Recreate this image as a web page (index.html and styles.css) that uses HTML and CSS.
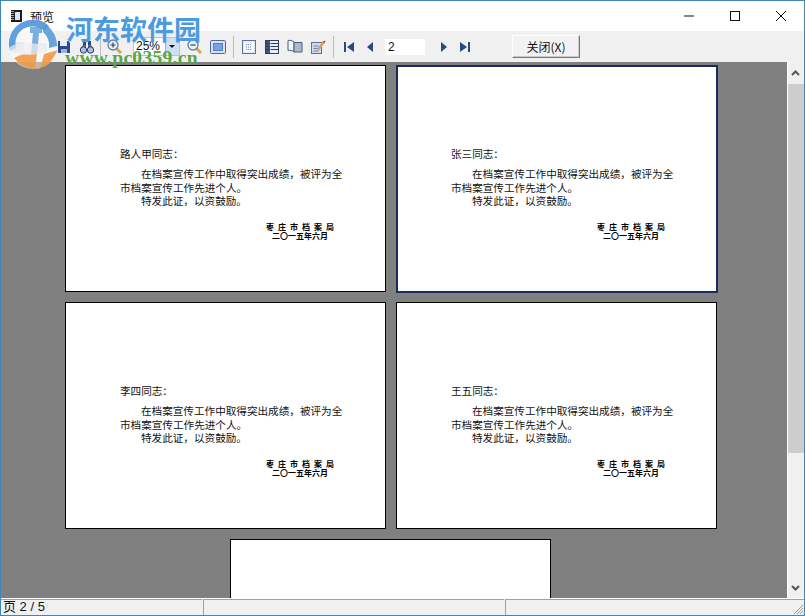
FILE: index.html
```html
<!DOCTYPE html>
<html lang="zh">
<head>
<meta charset="utf-8">
<title>预览</title>
<link rel="stylesheet" href="styles.css">
</head>
<body>
<div class="window">
  <header class="titlebar">
    <svg class="app-icon" width="14" height="14" viewBox="0 0 14 14"><rect x="1" y="1" width="11" height="12" fill="#1c1c1c"/><rect x="5" y="3" width="5" height="8" fill="#dfe6f2"/><path d="M1 2.500h3M1 4.500h3M1 6.500h3M1 8.500h3M1 10.500h3" stroke="#999" stroke-width="1"/></svg>
    <span class="title">预览</span>
    <div class="caption">
      <svg width="46" height="30" viewBox="0 0 46 30"><path d="M18 15h10" stroke="#111"/></svg>
      <svg width="46" height="30" viewBox="0 0 46 30"><rect x="18.500" y="10.500" width="9" height="9" fill="none" stroke="#111"/></svg>
      <svg width="46" height="30" viewBox="0 0 46 30"><path d="M18 10l10 10M28 10l-10 10" stroke="#111"/></svg>
    </div>
  </header>
  <div class="toolbar">
    <span class="tool"><svg width="16" height="14" viewBox="0 0 16 14"><rect x="1" y="2" width="13" height="10" rx="2" fill="#c9d6e6"/></svg></span>
    <span class="tool"><svg width="16" height="14" viewBox="0 0 16 14"><rect x="2" y="3" width="12" height="9" rx="2" fill="#d8dfe8"/></svg></span>
    <span class="tool"><svg width="16" height="16" viewBox="0 0 16 16"><path d="M2 2h10l2 2v10H2z" fill="#2a4a8c"/><rect x="4" y="2" width="7" height="5" fill="#e8eef8"/><rect x="5" y="10" width="6" height="4" fill="#9db4d8"/></svg></span>
    <span class="tool"><svg width="16" height="16" viewBox="0 0 16 16"><path d="M4 2h3v5H4zM9 2h3v5H9z" fill="#33456e"/><path d="M2 9l2-3h3v3zM14 9l-2-3H9v3z" fill="#52668f"/><circle cx="4.500" cy="11" r="3.200" fill="#a9bfe2" stroke="#2b3c66"/><circle cx="11.500" cy="11" r="3.200" fill="#a9bfe2" stroke="#2b3c66"/></svg></span>
    <span class="sep"></span>
    <span class="tool"><svg width="17" height="17" viewBox="0 0 17 17"><path d="M10 10l5 5" stroke="#c8b050" stroke-width="3"/><circle cx="7" cy="7" r="5" fill="#e6eef8" stroke="#6a7f99" stroke-width="1.300"/><path d="M4.500 7h5M7 4.500v5" stroke="#345" stroke-width="1.200"/></svg></span>
    <div class="combo"><span class="combo-value">25%</span><span class="combo-arrow"></span></div>
    <span class="tool"><svg width="17" height="17" viewBox="0 0 17 17"><path d="M10 10l5 5" stroke="#c8b050" stroke-width="3"/><circle cx="7" cy="7" r="5" fill="#e6eef8" stroke="#6a7f99" stroke-width="1.300"/><path d="M4.500 7h5" stroke="#345" stroke-width="1.200"/></svg></span>
    <span class="tool"><svg width="16" height="14" viewBox="0 0 16 14"><rect x=".5" y=".5" width="15" height="13" rx="1" fill="#d5e2f5" stroke="#51689a"/><rect x="3" y="3" width="10" height="8" fill="#4f7fcf"/><path d="M4 5h8M4 7h8M4 9h8" stroke="#a8c4ee"/></svg></span>
    <span class="sep wide"></span>
    <span class="tool"><svg width="14" height="14" viewBox="0 0 14 14"><rect x=".5" y=".5" width="13" height="13" fill="#dfe8f6" stroke="#5f7399"/><rect x="2" y="2" width="10" height="10" fill="#f6f8fc"/><path d="M4 4.500h6M4 7h6M4 9.500h6" stroke="#7288ae" stroke-dasharray="1 1"/></svg></span>
    <span class="tool"><svg width="14" height="14" viewBox="0 0 14 14"><rect x=".5" y=".5" width="13" height="13" fill="#e9eff9" stroke="#2f3e5c"/><rect x="1" y="1" width="4" height="12" fill="#40577f"/><path d="M5.500 3.500h8M5.500 6.500h8M5.500 9.500h8M1 3.500h4M1 6.500h4M1 9.500h4" stroke="#2f3e5c"/></svg></span>
    <span class="tool"><svg width="16" height="15" viewBox="0 0 16 15"><path d="M7 3C5.500 1.500 3 1 1 1.500v10c2-.5 4.500 0 6 1.500z" fill="#f4f6fa" stroke="#4c5c7c"/><path d="M7 3.500h8v9.500H7z" fill="#a9b9d2" stroke="#4c5c7c"/></svg></span>
    <span class="tool"><svg width="16" height="16" viewBox="0 0 16 16"><rect x="1.500" y="3.500" width="10" height="11" fill="#cfdcef" stroke="#5c7199"/><path d="M3.500 7h5M3.500 9.500h5M3.500 12h5" stroke="#6a80a5"/><path d="M7 10l6-8 2 1.500-6 8z" fill="#d9a066"/><path d="M12.500 2.500l2.500 1.500 .5-2.500z" fill="#c8402c"/></svg></span>
    <span class="sep narrow"></span>
    <span class="tool nav"><svg width="12" height="12" viewBox="0 0 12 12"><path d="M1 1h2v10H1zM11 1v10L4 6z" fill="#2b4a78"/></svg></span>
    <span class="tool nav"><svg width="12" height="12" viewBox="0 0 12 12"><path d="M9 1v10L3 6z" fill="#2b4a78"/></svg></span>
    <span class="page-input">2</span>
    <span class="tool nav"><svg width="12" height="12" viewBox="0 0 12 12"><path d="M3 1v10l6-5z" fill="#2b4a78"/></svg></span>
    <span class="tool nav"><svg width="12" height="12" viewBox="0 0 12 12"><path d="M9 1h2v10H9zM1 1v10l7-5z" fill="#2b4a78"/></svg></span>
    <button class="close-btn">关闭(X)</button>
  </div>
  <div class="middle">
    <main class="canvas">
      <div class="pages">
        <article class="page">
          <p class="name">路人甲同志：</p>
          <p class="body indent">在档案宣传工作中取得突出成绩，被评为全</p>
          <p class="body">市档案宣传工作先进个人。</p>
          <p class="body indent">特发此证，以资鼓励。</p>
          <p class="org">枣 庄 市 档 案 局</p>
          <p class="date">二〇一五年六月</p>
        </article>
        <article class="page selected">
          <p class="name">张三同志：</p>
          <p class="body indent">在档案宣传工作中取得突出成绩，被评为全</p>
          <p class="body">市档案宣传工作先进个人。</p>
          <p class="body indent">特发此证，以资鼓励。</p>
          <p class="org">枣 庄 市 档 案 局</p>
          <p class="date">二〇一五年六月</p>
        </article>
        <article class="page">
          <p class="name">李四同志：</p>
          <p class="body indent">在档案宣传工作中取得突出成绩，被评为全</p>
          <p class="body">市档案宣传工作先进个人。</p>
          <p class="body indent">特发此证，以资鼓励。</p>
          <p class="org">枣 庄 市 档 案 局</p>
          <p class="date">二〇一五年六月</p>
        </article>
        <article class="page">
          <p class="name">王五同志：</p>
          <p class="body indent">在档案宣传工作中取得突出成绩，被评为全</p>
          <p class="body">市档案宣传工作先进个人。</p>
          <p class="body indent">特发此证，以资鼓励。</p>
          <p class="org">枣 庄 市 档 案 局</p>
          <p class="date">二〇一五年六月</p>
        </article>
        <article class="page last"></article>
      </div>
    </main>
    <aside class="scrollbar">
      <svg width="17" height="17" viewBox="0 0 17 17"><path d="M5 10l3.500-3.500L12 10" fill="none" stroke="#555" stroke-width="2"/></svg>
      <div class="track"><div class="thumb"></div></div>
      <svg width="17" height="17" viewBox="0 0 17 17"><path d="M5 7l3.500 3.500L12 7" fill="none" stroke="#555" stroke-width="2"/></svg>
    </aside>
  </div>
  <footer class="status">
    <div class="panel first">页 2 / 5</div>
    <div class="panel second"></div>
    <div class="panel third">
      <svg class="grip" width="12" height="12" viewBox="0 0 12 12"><path d="M11 2l-9 9M11 5l-6 6M11 8l-3 3" stroke="#999"/></svg>
    </div>
  </footer>
  <div class="watermark">
    <svg class="wm-logo" width="58" height="52" viewBox="0 0 58 52">
      <circle cx="28" cy="26" r="25" fill="#fff" opacity=".45"/>
      <path d="M5 33A24 24 0 0 1 44 8l-5 5A17 17 0 0 0 11 30z" fill="#4f96d8" opacity=".9"/>
      <path d="M40 6a25 25 0 0 1 12 22l-8 2a18 18 0 0 0-6-16z" fill="#4f96d8" opacity=".85"/>
      <path d="M9 40a25 25 0 0 0 36 5l8-13-14 4-4 15h-5l2-15H18z" fill="#ef9a45" opacity=".9"/>
      <path d="M25 9h12v6h-3l-2 21h-6l2-21h-3z" fill="#4f96d8" opacity=".75"/>
      <ellipse cx="23" cy="31" rx="19" ry="6" fill="#eee" opacity=".7"/>
    </svg>
    <span class="wm-cn">河东软件园</span>
    <span class="wm-url">www.pc0359.cn</span>
  </div>
</div>
</body>
</html>
```

FILE: styles.css
```css
* { box-sizing: border-box; }
html, body { margin: 0; padding: 0; }
body { width: 805px; height: 616px; overflow: hidden; font-family: "Noto Sans CJK SC", "Liberation Sans", sans-serif; }
.window { position: relative; width: 805px; height: 616px; display: flex; flex-direction: column; border: 1px solid #3f86bd; background: #f0f0f0; }
.titlebar { height: 30px; background: #fff; display: flex; align-items: center; padding-left: 9px; flex: none; }
.app-icon { flex: none; }
.title { font-size: 12px; margin-left: 6px; color: #111; }
.caption { margin-left: auto; display: flex; }
.caption svg { display: block; }
.toolbar { height: 31px; background: #f0f0f0; display: flex; align-items: center; padding-left: 5px; flex: none; }
.tool { width: 23px; height: 24px; display: flex; align-items: center; justify-content: center; flex: none; }
.tool.nav { width: 21px; }
.sep { width: 5px; height: 22px; flex: none; }
.sep::after { content: ""; display: block; width: 1px; height: 22px; background: #bdbdbd; margin: 0 auto; }
.sep.wide { width: 8px; }
.sep.narrow { width: 9px; }
.combo { width: 47px; height: 19px; margin: 0 3px 0 7px; display: flex; background: #fff; border: 1px solid #a9c6e6; flex: none; }
.combo-value { flex: 1; font: 12px/17px "Liberation Sans", sans-serif; color: #111; padding-left: 2px; }
.combo-arrow { width: 14px; background: #cfe0f4; border-left: 1px solid #8fb2dc; position: relative; }
.combo-arrow::after { content: ""; position: absolute; left: 3px; top: 7px; border: 3px solid transparent; border-top: 3px solid #111; }
.page-input { width: 40px; height: 16px; margin: 0 8px 0 5px; background: #fff; font: 12px/16px "Liberation Sans", sans-serif; color: #111; padding-left: 3px; flex: none; }
.close-btn { width: 68px; height: 23px; margin-left: 37px; padding: 0; background: #f2f2f2; border: 1px solid; border-color: #fff #7a7a7a #7a7a7a #fff; box-shadow: inset -1px -1px 0 #c8c8c8; font: 12px "Noto Sans CJK SC", sans-serif; color: #111; flex: none; }
.middle { flex: 1; min-height: 0; display: flex; }
.canvas { flex: 1; min-width: 0; background: #808080; overflow: hidden; padding: 3px 0 0 64px; }
.pages { width: 652px; display: flex; flex-wrap: wrap; column-gap: 10px; row-gap: 10px; }
.page { width: 321px; height: 227px; background: #fff; border: 1px solid #000; padding: 81px 0 0 54px; flex: none; color: #111; }
.page.selected { width: 322px; height: 228px; border: 2px solid #1a2a5e; margin: 0 -1px -1px 0; padding: 80px 0 0 53px; }
.page.last { margin-left: 165px; }
.page p { margin: 0; }
.name { font-size: 10.6px; line-height: 14px; margin-bottom: 6px !important; }
.body { font-size: 10.6px; line-height: 13.5px; white-space: nowrap; }
.indent { padding-left: 21px; }
.org, .date { font-size: 8px; font-weight: 700; line-height: 9px; white-space: nowrap; color: #000; }
.org { margin: 14px 0 0 146px !important; letter-spacing: 1.1px; }
.date { margin-left: 152px !important; }
.scrollbar { width: 17px; flex: none; background: #f0f0f0; border-left: 1px solid #fff; display: flex; flex-direction: column; }
.scrollbar svg { flex: none; display: block; margin: 3px 0 2px -1px; }
.track { flex: 1; min-height: 0; }
.thumb { height: 369px; background: #cdcdcd; }
.status { height: 17px; flex: none; display: flex; background: #f0f0f0; border-top: 1px solid #fff; font: 13px/14px "Liberation Sans", "Noto Sans CJK SC", sans-serif; color: #111; }
.panel { border-left: 1px solid #a0a0a0; border-top: 1px solid #a0a0a0; position: relative; }
.first { width: 201px; border-left: 0; padding-left: 2px; }
.second { width: 301px; margin-left: 1px; }
.third { flex: 1; margin-left: 1px; }
.grip { position: absolute; right: 0; bottom: 0; }
.watermark { position: absolute; left: 4px; top: 13px; width: 200px; height: 56px; pointer-events: none; }
.wm-logo { position: absolute; left: 0; top: 4px; }
.wm-cn { position: absolute; left: 61px; top: -1px; font: 700 27px/32px "Noto Sans CJK SC", sans-serif; color: #4c9be0; white-space: nowrap; }
.wm-url { position: absolute; left: 60px; top: 34px; font: 700 19.5px/20px "Liberation Serif", serif; letter-spacing: .3px; color: #5aa646; white-space: nowrap; }
```
